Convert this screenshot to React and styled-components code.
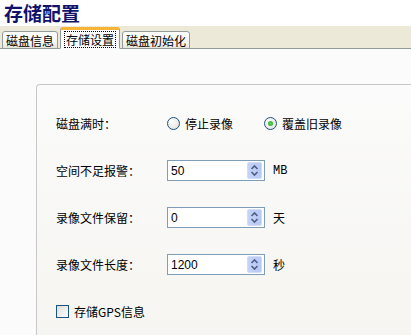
import React from "react";
import styled, { createGlobalStyle } from "styled-components";

const Global = createGlobalStyle`
  body {
    margin: 0;
    background: #ffffff;
    font-family: "SimSun", "Noto Sans CJK SC", sans-serif;
    font-size: 12px;
    color: #000;
  }
`;

const Title = styled.h1`
  margin: 0;
  height: 26px;
  padding-left: 4px;
  font-family: "Noto Sans CJK SC", sans-serif;
  font-size: 19px;
  font-weight: bold;
  line-height: 26px;
  color: #10126c;
`;

const TabBar = styled.div`
  display: flex;
  align-items: flex-end;
  gap: 2px;
  height: 22px;
  padding-left: 2px;
  background: #ece9d8;
  border-bottom: 1px solid #919b9c;
`;

const Tab = styled.div`
  box-sizing: border-box;
  height: ${(p) => (p.$active ? "22px" : "18px")};
  margin-bottom: -1px;
  padding: 0 ${(p) => (p.$active ? "4px" : "2px")};
  display: flex;
  align-items: center;
  font-family: "Noto Sans CJK SC", sans-serif;
  font-size: 12px;
  border: 1px solid #919b9c;
  border-bottom: ${(p) => (p.$active ? "1px solid #fbfbfc" : "1px solid #919b9c")};
  border-top: ${(p) => (p.$active ? "3px solid #f8b339" : "1px solid #919b9c")};
  border-radius: 3px 3px 0 0;
  background: ${(p) =>
    p.$active ? "#fcfcfe" : "linear-gradient(#ffffff, #f4f3ee 70%, #e6e4da)"};
`;

const TabLabel = styled.span`
  padding: 0 1px;
  line-height: 15px;
  outline: ${(p) => (p.$focus ? "1px dotted #000" : "none")};
`;

const Page = styled.div`
  background: #fbfbfc;
  padding: 35px 0 0 36px;
  height: 286px;
  box-sizing: border-box;
  overflow: hidden;
`;

const Panel = styled.div`
  border-top: 1px solid #c8c8c8;
  border-left: 1px solid #c8c8c8;
  border-top-left-radius: 4px;
  background: linear-gradient(#fbfbfb, #f4f3ee);
  height: 300px;
  padding: 28px 0 0 19px;
  display: flex;
  flex-direction: column;
  gap: 26px;
  font-family: "Noto Sans CJK SC", sans-serif;
  font-size: 12px;
`;

const Row = styled.div`
  display: flex;
  align-items: center;
  height: 21px;
`;

const Label = styled.div`
  width: 111px;
`;

const Radio = styled.label`
  display: flex;
  align-items: center;
  gap: 5px;
  width: 97px;
`;

const RadioDot = styled.span`
  box-sizing: border-box;
  width: 13px;
  height: 13px;
  border-radius: 50%;
  border: 1px solid #1c5180;
  background: radial-gradient(circle at 35% 35%, #ffffff, #dcdcd6);
  display: flex;
  align-items: center;
  justify-content: center;
  &::after {
    content: "";
    width: 5px;
    height: 5px;
    border-radius: 50%;
    background: ${(p) => (p.$checked ? "radial-gradient(#5fd35f, #21a121)" : "transparent")};
  }
`;

const Field = styled.div`
  box-sizing: border-box;
  width: 98px;
  height: 21px;
  border: 1px solid #7f9db9;
  background: #fff;
  display: flex;
  align-items: center;
  padding: 0 2px 0 3px;
  margin-right: 8px;
`;

const Value = styled.span`
  flex: 1;
  font-family: "Liberation Sans", sans-serif;
  font-size: 12px;
`;

const Spin = styled.div`
  width: 15px;
  height: 17px;
  border-radius: 2px;
  background: linear-gradient(90deg, #c6d3f7, #b7c8f5);
  border: 1px solid #d2dcf8;
  box-sizing: border-box;
  display: flex;
  flex-direction: column;
  align-items: center;
  justify-content: center;
`;

const Unit = styled.span`
  font-family: "Liberation Mono", "Noto Sans CJK SC", monospace;
`;

const Check = styled.label`
  display: flex;
  align-items: center;
  gap: 5px;
  height: 21px;
`;

const Box = styled.span`
  box-sizing: border-box;
  width: 13px;
  height: 13px;
  border: 1px solid #1c5180;
  background: linear-gradient(135deg, #dcdcd7, #ffffff);
`;

const Spinner = () => (
  <Spin>
    <svg width="9" height="13" viewBox="0 0 9 13">
      <path d="M1.5 5 L4.5 2 L7.5 5" fill="none" stroke="#4d6185" strokeWidth="1.6" />
      <path d="M1.5 8 L4.5 11 L7.5 8" fill="none" stroke="#4d6185" strokeWidth="1.6" />
    </svg>
  </Spin>
);

const NumberRow = ({ label, value, unit }) => (
  <Row>
    <Label>{label}</Label>
    <Field>
      <Value>{value}</Value>
      <Spinner />
    </Field>
    <Unit>{unit}</Unit>
  </Row>
);

export default function App() {
  return (
    <>
      <Global />
      <Title>存储配置</Title>
      <TabBar>
        <Tab>
          <TabLabel>磁盘信息</TabLabel>
        </Tab>
        <Tab $active>
          <TabLabel $focus>存储设置</TabLabel>
        </Tab>
        <Tab>
          <TabLabel>磁盘初始化</TabLabel>
        </Tab>
      </TabBar>
      <Page>
        <Panel>
          <Row>
            <Label>磁盘满时：</Label>
            <Radio>
              <RadioDot />
              停止录像
            </Radio>
            <Radio>
              <RadioDot $checked />
              覆盖旧录像
            </Radio>
          </Row>
          <NumberRow label="空间不足报警：" value="50" unit="MB" />
          <NumberRow label="录像文件保留：" value="0" unit="天" />
          <NumberRow label="录像文件长度：" value="1200" unit="秒" />
          <Check>
            <Box />
            存储GPS信息
          </Check>
        </Panel>
      </Page>
    </>
  );
}
